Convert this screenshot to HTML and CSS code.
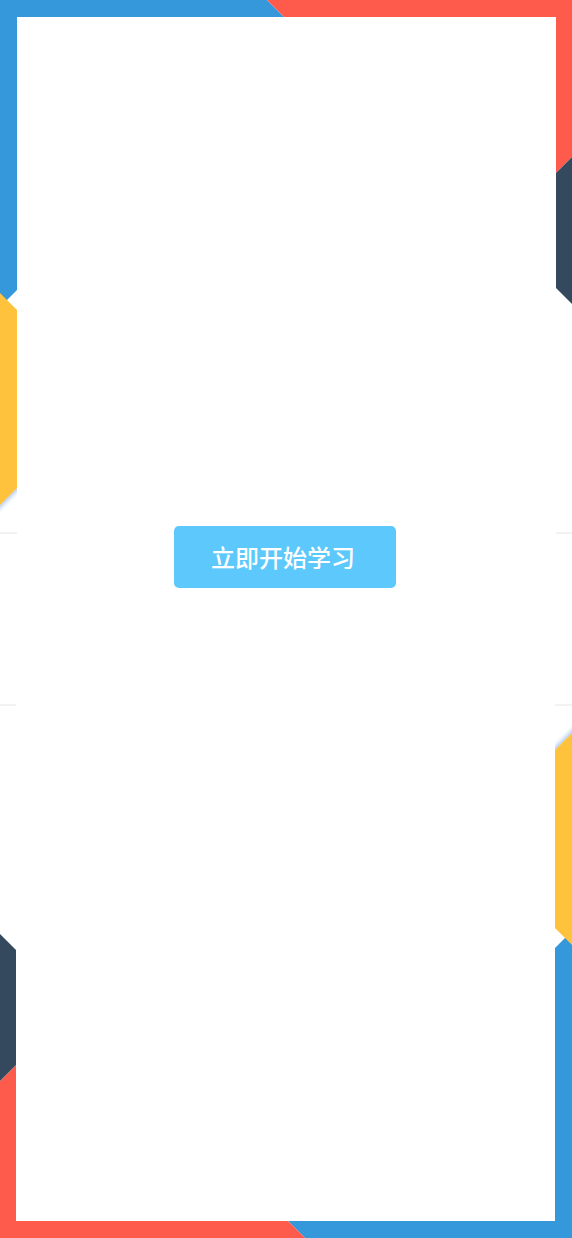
FILE: index.html
```html
<!DOCTYPE html>
<html lang="zh-CN">
<head>
<meta charset="utf-8">
<title>立即开始学习</title>
<link rel="stylesheet" href="styles.css">
</head>
<body>
<div class="page">
  <svg class="frame" viewBox="0 0 572 1238" width="572" height="1238" aria-hidden="true">
    <defs>
      <linearGradient id="shade" gradientUnits="userSpaceOnUse" x1="4" y1="501" x2="8.5" y2="505.5">
        <stop offset="0" stop-color="#b4cbee"/>
        <stop offset="1" stop-color="#e8effa" stop-opacity="0"/>
      </linearGradient>
      <g id="half">
        <polygon class="c-blue" points="0,0 267,0 284,17 17,17 17,290 0,307"/>
        <polygon class="c-red" points="267,0 572,0 572,157 556,173 556,17 284,17"/>
        <polygon class="c-navy" points="556,173 572,157 572,304 556,288"/>
        <polygon class="c-shade" points="0,505 17,488 17,497 0,514"/>
        <polygon class="c-yellow" points="0,293 17,310 17,488 0,505"/>
        <rect class="c-rule" x="0" y="532.5" width="17" height="1"/>
        <rect class="c-rule" x="556" y="532.5" width="16" height="1"/>
      </g>
    </defs>
    <use href="#half"/>
    <use href="#half" transform="rotate(180 286 619)"/>
  </svg>
  <main class="content">
    <button class="start" type="button">立即开始学习</button>
  </main>
</div>
</body>
</html>
```

FILE: styles.css
```css
html, body {
  margin: 0;
  padding: 0;
  background: #ffffff;
}

.page {
  position: relative;
  width: 572px;
  height: 1238px;
  overflow: hidden;
  background: #ffffff;
  font-family: "Noto Sans CJK SC", "Noto Sans", sans-serif;
}

.frame {
  position: absolute;
  left: 0;
  top: 0;
  display: block;
}

.c-blue { fill: #3498db; }
.c-red { fill: #ff5b4c; }
.c-navy { fill: #34495e; }
.c-yellow { fill: #ffc23d; }
.c-shade { fill: url(#shade); }
.c-rule { fill: #e6e6e6; }

.content {
  position: relative;
  display: flex;
  justify-content: center;
  padding-top: 526px;
}

.start {
  width: 222px;
  height: 62px;
  margin-left: -2px;
  border: 0;
  border-radius: 5px;
  background: #5dc8fb;
  color: #ffffff;
  font-family: "Noto Sans CJK SC", "Noto Sans", sans-serif;
  font-size: 24px;
  font-weight: 500;
  line-height: 62px;
  padding: 0 4px 0 0;
  cursor: pointer;
}
```
